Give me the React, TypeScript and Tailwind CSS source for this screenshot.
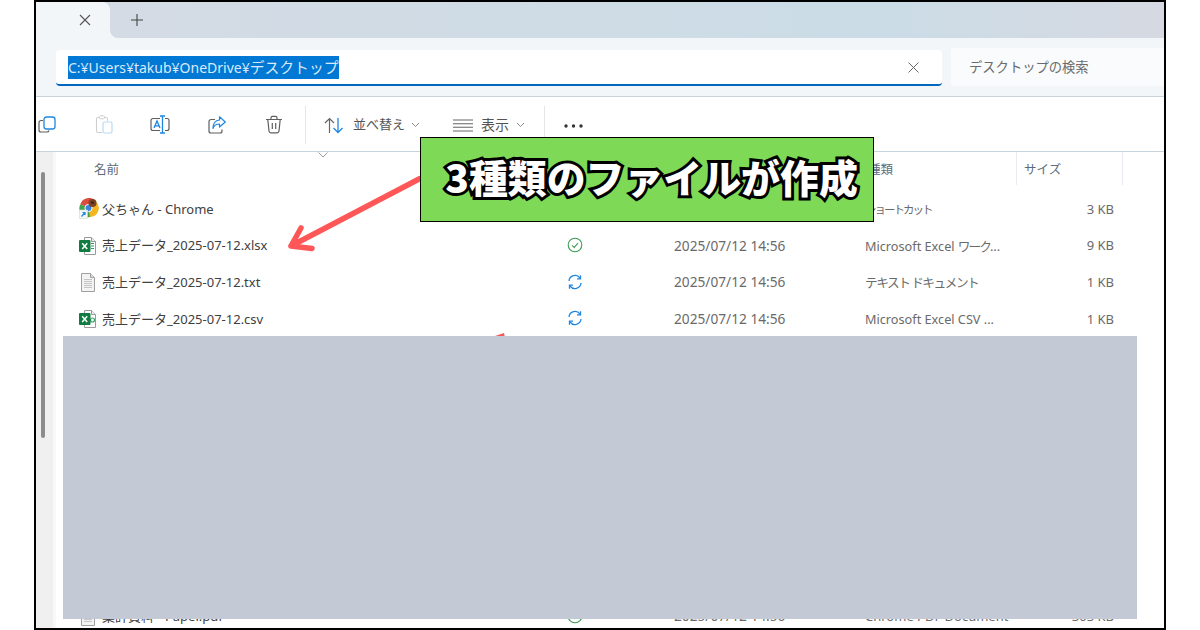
import React from "react";

const font = { fontFamily: '"Noto Sans", "Noto Sans CJK JP", sans-serif' };

function ExcelIcon({ csv }: { csv?: boolean }) {
  return (
    <svg width="17" height="18" viewBox="0 0 17 18" className="shrink-0">
      <path d="M5.5 .5H12.5L16.5 4.5V17.5H5.5Z" fill="#fff" stroke="#9a9a9a" />
      <path d="M12.5 .5V4.5H16.5" fill="#eee" stroke="#9a9a9a" />
      {csv ? (
        <circle cx="13.5" cy="10" r="2" fill="none" stroke="#3f9f6a" strokeWidth="1.2" />
      ) : (
        <path d="M12 6.5H15M12 9H15M12 11.5H15" stroke="#2f9a60" strokeWidth="1.2" />
      )}
      <rect x="0" y="3" width="11.5" height="12" rx="1" fill="#107c41" />
      <path d="M3.2 6.2L8.2 12M8.2 6.2L3.2 12" stroke="#fff" strokeWidth="1.5" />
    </svg>
  );
}

function TextIcon() {
  return (
    <svg width="17" height="19" viewBox="0 0 17 19" className="shrink-0">
      <path d="M2.5 .5H11.5L15.5 4.5V18.5H2.5Z" fill="#f3f3f3" stroke="#a0a0a0" />
      <path d="M11.5 .5V4.5H15.5" fill="#ddd" stroke="#a0a0a0" />
      <path d="M5 6.5H13M5 8.5H13M5 10.5H13M5 12.5H13M5 14.5H13" stroke="#c4c4c4" />
    </svg>
  );
}

function ChromeIcon() {
  return (
    <svg width="20" height="21" viewBox="0 0 20 21" className="shrink-0 -mt-[1px]">
      <path d="M1.2 6.5A9 9 0 0 1 17 3.5L10 9.5Z" fill="#dd4b3e" />
      <path d="M17 3.5A9 9 0 0 1 11 19L10 9.5Z" fill="#f3b61f" />
      <path d="M11 19A9 9 0 0 1 1.2 6.5L10 9.5Z" fill="#3fa34d" />
      <circle cx="9.5" cy="10" r="3.6" fill="#3b82e0" stroke="#fff" />
      <circle cx="13.5" cy="5" r="4" fill="#7d4326" />
      <circle cx="13.5" cy="4.5" r="1.5" fill="#4a2413" />
      <rect x="0.5" y="12" width="8" height="8.5" fill="#f4f6f8" stroke="#d6d6d6" strokeWidth=".6" />
      <path d="M2.5 18.5L6 14.5M3.5 14.5H6V17" fill="none" stroke="#1f86e0" strokeWidth="1.2" />
    </svg>
  );
}

function CheckStatus() {
  return (
    <svg width="16" height="16" viewBox="0 0 16 16" className="-mt-[2px]">
      <circle cx="8" cy="8" r="6.8" fill="none" stroke="#3d9a55" strokeWidth="1.1" />
      <path d="M5 8.3L7.2 10.4L11 6.2" fill="none" stroke="#3d9a55" strokeWidth="1.1" />
    </svg>
  );
}

function SyncStatus() {
  return (
    <svg width="16" height="16" viewBox="0 0 16 16" className="-mt-[2px]">
      <path d="M2 7A6 6 0 0 1 13 4.2" fill="none" stroke="#1f86e0" strokeWidth="1.3" />
      <path d="M13.5 1.2V4.8H10" fill="none" stroke="#1f86e0" strokeWidth="1.3" />
      <path d="M14 9A6 6 0 0 1 3 11.8" fill="none" stroke="#1f86e0" strokeWidth="1.3" />
      <path d="M2.5 14.8V11.2H6" fill="none" stroke="#1f86e0" strokeWidth="1.3" />
    </svg>
  );
}

function Chevron() {
  return (
    <svg width="9" height="6" viewBox="0 0 9 6">
      <path d="M1 1L4.5 4.5L8 1" fill="none" stroke="#8a8a8a" strokeWidth="1" />
    </svg>
  );
}

const rows = [
  {
    icon: <ExcelIcon />,
    name: "売上データ_2025-07-12.xlsx",
    status: <CheckStatus />,
    type: (
      <>
        Microsoft Excel <span className="tracking-[-2px]">ワーク</span>...
      </>
    ),
    size: "9 KB",
  },
  {
    icon: <TextIcon />,
    name: "売上データ_2025-07-12.txt",
    status: <SyncStatus />,
    type: <span className="tracking-[-1.5px]">テキスト ドキュメント</span>,
    size: "1 KB",
  },
  { icon: <ExcelIcon csv />, name: "売上データ_2025-07-12.csv", status: <SyncStatus />, type: "Microsoft Excel CSV ...", size: "1 KB" },
];

export default function App() {
  return (
    <div className="relative w-[1200px] h-[630px] bg-white overflow-hidden" style={font}>
      <div className="ml-[34px] w-[1132px] h-[630px] border-2 border-black flex flex-col overflow-hidden">
        {/* tab strip */}
        <div className="h-[36px] shrink-0 flex bg-gradient-to-r from-[#d5dbe4] via-[#cbdce6] via-75% to-[#d6d9e2]">
          <div className="w-[74px] bg-[#f3f6f9] rounded-tr-lg flex items-center justify-end pr-[19px]">
            <svg width="12" height="12" viewBox="0 0 12 12">
              <path d="M1 1L11 11M11 1L1 11" stroke="#555" strokeWidth="1.1" />
            </svg>
          </div>
          <div className="w-[8px] h-[8px] self-end bg-[#f3f6f9]">
            <div className="w-full h-full bg-[#d5dbe4] rounded-bl-lg" />
          </div>
          <div className="ml-[13px] flex items-center">
            <svg width="12" height="12" viewBox="0 0 12 12">
              <path d="M6 0V12M0 6H12" stroke="#444" strokeWidth="1.1" />
            </svg>
          </div>
        </div>

        {/* address row */}
        <div className="h-[59px] shrink-0 bg-[#f3f6f9] border-b border-[#c8d2da] flex items-start pt-[10px] pl-[20px]">
          <div className="w-[886px] h-[36px] mt-[2px] bg-white rounded border-b-2 border-[#0067c0] flex items-center pl-[12px] pr-[23px] justify-between">
            <span className="bg-[#0078d4] text-[#dbeafa] text-[14px] leading-[22px] whitespace-nowrap">
              C:¥Users¥takub¥OneDrive¥<span className="text-[14.8px]">デスクトップ</span>
            </span>
            <svg width="11" height="11" viewBox="0 0 11 11">
              <path d="M.5 .5L10.5 10.5M10.5 .5L.5 10.5" stroke="#666" strokeWidth="1" />
            </svg>
          </div>
          <div className="ml-[9px] flex-1 h-[38px] bg-[#f9fbfc] rounded-l flex items-center pl-[18px] pt-[2px] text-[13.3px] text-[#6b6b6b] whitespace-nowrap">
            デスクトップの検索
          </div>
        </div>

        {/* toolbar */}
        <div className="h-[55px] shrink-0 bg-white border-b border-[#c5d3df] flex items-center text-[13px] text-[#555]">
          <svg width="18" height="17" viewBox="0 0 18 17" className="ml-[2px] mt-[1px]">
            <path d="M5 4.5H3A2 2 0 0 0 1 6.5V14A2 2 0 0 0 3 16H9A2 2 0 0 0 11 14.5" fill="none" stroke="#5f5f5f" strokeWidth="1.2" />
            <rect x="6" y="1" width="11" height="12" rx="2.5" fill="#fff" stroke="#1f86e0" strokeWidth="1.3" />
          </svg>
          <svg width="18" height="19" viewBox="0 0 18 19" className="ml-[39px] mt-[1px]">
            <path d="M5 2.5H3A1.5 1.5 0 0 0 1.5 4V16A1.5 1.5 0 0 0 3 17.5H7" fill="none" stroke="#cfcfcf" strokeWidth="1.1" />
            <path d="M9 2.5H11A1.5 1.5 0 0 1 12.5 4V6" fill="none" stroke="#cfcfcf" strokeWidth="1.1" />
            <rect x="4.5" y=".8" width="5" height="3" rx="1" fill="#fff" stroke="#cfcfcf" />
            <rect x="8" y="7" width="9" height="11" rx="1.5" fill="#fff" stroke="#b9daf5" strokeWidth="1.2" />
          </svg>
          <svg width="20" height="19" viewBox="0 0 20 19" className="ml-[37px] mt-[1px]">
            <path d="M10 3.5H3A2 2 0 0 0 1 5.5V13.5A2 2 0 0 0 3 15.5H10" fill="none" stroke="#5f5f5f" strokeWidth="1.2" />
            <path d="M15 3.5H17A2 2 0 0 1 19 5.5V13.5A2 2 0 0 1 17 15.5H15" fill="none" stroke="#5f5f5f" strokeWidth="1.2" />
            <path d="M10 1H15M12.5 1V18M10 18H15" fill="none" stroke="#1f86e0" strokeWidth="1.3" />
            <path d="M4 13L7 6L10 13M5 10.8H9" fill="none" stroke="#1f86e0" strokeWidth="1.3" />
          </svg>
          <svg width="18" height="18" viewBox="0 0 18 18" className="ml-[38px] mt-[1px]">
            <path d="M7 3.5H3A2 2 0 0 0 1 5.5V15A2 2 0 0 0 3 17H12A2 2 0 0 0 14 15V13.5" fill="none" stroke="#5f5f5f" strokeWidth="1.2" />
            <path d="M11.5 .8L17.3 6L11.5 11V8C8 8 6 9.5 5 12.5C5 8 7 4.5 11.5 4Z" fill="#fff" stroke="#1f86e0" strokeWidth="1.2" strokeLinejoin="round" />
          </svg>
          <svg width="18" height="19" viewBox="0 0 18 19" className="ml-[39px] mt-[1px]">
            <path d="M1 4.5H17M6 4.5V2.8A1.5 1.5 0 0 1 7.5 1.3H10.5A1.5 1.5 0 0 1 12 2.8V4.5" fill="none" stroke="#5f5f5f" strokeWidth="1.2" />
            <path d="M2.8 4.5L4 16A2 2 0 0 0 6 17.8H12A2 2 0 0 0 14 16L15.2 4.5" fill="none" stroke="#5f5f5f" strokeWidth="1.2" />
            <path d="M7.3 8V14M10.7 8V14" stroke="#5f5f5f" strokeWidth="1.2" />
          </svg>
          <div className="ml-[22px] w-px h-[38px] mt-[1px] bg-[#e6e6e6]" />
          <svg width="20" height="17" viewBox="0 0 20 17" className="ml-[18px] mt-[2px]">
            <path d="M5.5 16V1.5M1 6L5.5 1.5L10 6" fill="none" stroke="#666" strokeWidth="1.2" />
            <path d="M14 1V15.5M9.5 11L14 15.5L18.5 11" fill="none" stroke="#1f86e0" strokeWidth="1.3" />
          </svg>
          <span className="ml-[9px] mt-[2px] whitespace-nowrap">並べ替え</span>
          <span className="ml-[6px] mt-[2px] flex"><Chevron /></span>
          <svg width="20" height="13" viewBox="0 0 20 13" className="ml-[33px] mt-[2px]">
            <path d="M0 1H20M0 4.7H20M0 8.3H20M0 12H20" stroke="#666" strokeWidth="1.1" />
          </svg>
          <span className="ml-[8px] text-[14px] whitespace-nowrap">表示</span>
          <span className="ml-[7px] mt-[2px] flex"><Chevron /></span>
          <div className="ml-[19px] w-px h-[38px] mt-[1px] bg-[#e6e6e6]" />
          <svg width="19" height="4" viewBox="0 0 19 4" className="ml-[19px] mt-[4px]">
            <circle cx="2" cy="2" r="1.7" fill="#333" />
            <circle cx="9.5" cy="2" r="1.7" fill="#333" />
            <circle cx="17" cy="2" r="1.7" fill="#333" />
          </svg>
        </div>

        {/* body */}
        <div className="flex-1 flex min-h-0">
          <div className="w-[20px] shrink-0 bg-[#f0f0f0] border-r-[3px] border-[#f8f8f8] pl-[5px] pt-[20px]">
            <div className="w-[4px] h-[266px] rounded-full bg-[#8c8c8c]" />
          </div>
          <div className="flex-1 min-w-0 flex flex-col">
            <div className="relative h-[33px] shrink-0 flex text-[12.5px] text-[#5b6b7b]">
              <div className="w-[809px] pl-[38px] pt-[4px] flex items-center">名前</div>
              <div className="absolute left-[262px] top-0 flex"><svg width="10" height="6" viewBox="0 0 10 6"><path d="M.5 .5L5 5L9.5 .5" fill="none" stroke="#9a9a9a" /></svg></div>
              <div className="w-[152px] pl-[3px] pt-[4px] flex items-center border-r border-[#e8ecf0]">種類</div>
              <div className="w-[106px] pl-[7px] pt-[4px] flex items-center border-r border-[#e8ecf0]">サイズ</div>
            </div>
            <div className="mt-[6px] flex flex-col text-[13px] text-[#6a6a6a]">
              <div className="h-[36.7px] flex items-center">
                <div className="w-[507px] pl-[23px] flex items-center gap-[3px] text-[#404040] whitespace-nowrap"><ChromeIcon /><span>父ちゃん - Chrome</span></div>
                <div className="w-[111px]" />
                <div className="w-[191px]" />
                <div className="w-[175px] whitespace-nowrap text-[11.5px] tracking-[-2px]">ショートカット</div>
                <div className="w-[74px] text-right">3 KB</div>
              </div>
              {rows.map((r) => (
                <div key={r.name} className="h-[36.7px] flex items-center">
                  <div className="w-[507px] pl-[23px] flex items-center gap-[6px] text-[#404040] whitespace-nowrap">{r.icon}<span>{r.name}</span></div>
                  <div className="w-[111px] pl-[4px] flex items-center">{r.status}</div>
                  <div className="w-[191px] whitespace-nowrap text-[13.7px]">2025/07/12 14:56</div>
                  <div className="w-[175px] whitespace-nowrap text-[12.7px]">{r.type}</div>
                  <div className="w-[74px] text-right">{r.size}</div>
                </div>
              ))}
            </div>
            <div className="flex-1" />
            <div className="h-[36.7px] mb-[-7px] shrink-0 flex items-center text-[13px] text-[#6a6a6a]">
              <div className="w-[507px] pl-[23px] flex items-center gap-[6px] text-[#404040] whitespace-nowrap"><TextIcon /><span>集計資料 - Paper.pdf</span></div>
              <div className="w-[111px] pl-[4px] flex items-center"><CheckStatus /></div>
              <div className="w-[191px] whitespace-nowrap text-[13.7px]">2025/07/12 14:56</div>
              <div className="w-[175px] whitespace-nowrap">Chrome PDF Document</div>
              <div className="w-[74px] text-right">303 KB</div>
            </div>
          </div>
        </div>
      </div>

      {/* overlays */}
      <svg width="140" height="80" viewBox="0 0 140 80" className="absolute left-[285px] top-[172px]">
        <path d="M135 6.5L6 74M16 56L6 74L27 76.5" fill="none" stroke="#ff5757" strokeWidth="5.5" strokeLinecap="round" strokeLinejoin="round" />
      </svg>
      <svg width="14" height="6" viewBox="0 0 14 6" className="absolute left-[492px] top-[332px]">
        <path d="M0 5L12 1L13 6H0Z" fill="#ff5757" />
      </svg>
      <div className="absolute left-[63px] top-[336px] w-[1074px] h-[283px] bg-[#c3cad6]" />
      <div className="absolute left-[420px] top-[137px] w-[454px] h-[85px] bg-[#7ed957] border border-black flex items-center justify-center pb-[6px] pl-[9px]">
        <span className="text-[38.9px] font-black text-white whitespace-nowrap [-webkit-text-stroke:6px_#000] [paint-order:stroke_fill]" style={{ fontFamily: '"Noto Sans CJK JP", sans-serif' }}>3種類のファイルが作成</span>
      </div>
    </div>
  );
}
